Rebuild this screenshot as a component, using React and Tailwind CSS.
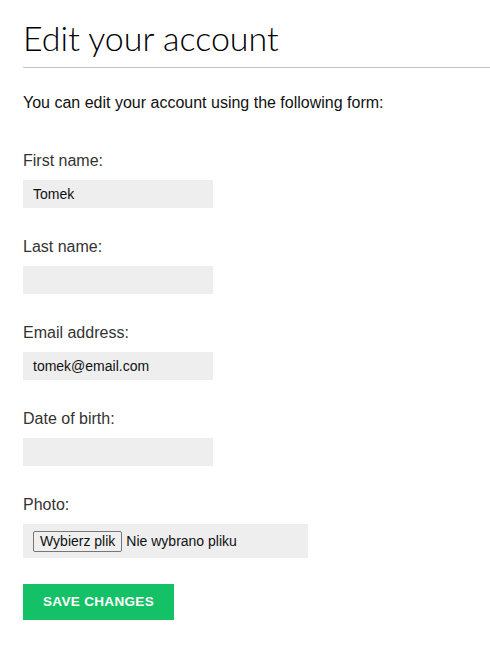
import React from 'react';

const Field = ({ label, value }) => (
  <div className="mb-[30px]">
    <label className="block text-[16px] leading-[18px] text-[#333] mb-[10px]">{label}</label>
    <div className="w-[190px] h-[28px] bg-[#eeeeee] pl-[10px] flex items-center text-[14px] text-[#111]">
      {value}
    </div>
  </div>
);

const App = () => {
  return (
    <div className="min-h-[651px] bg-white font-['Liberation_Sans',Arial,sans-serif] pl-[23px] pt-[18px]">
      <h1 className="font-['Lato',sans-serif] font-light text-[34px] leading-[40px] text-black">Edit your account</h1>
      <div className="h-px bg-[#c4c4c4] mt-[9px]" />
      <p className="mt-[25px] text-[16px] leading-[20px] text-[#111] mb-[39px]">
        You can edit your account using the following form:
      </p>
      <div>
        <Field label="First name:" value="Tomek" />
        <Field label="Last name:" value="" />
        <Field label="Email address:" value="tomek@email.com" />
        <Field label="Date of birth:" value="" />
        <div className="mb-[26px]">
          <label className="block text-[16px] leading-[18px] text-[#333] mb-[10px]">Photo:</label>
          <div className="w-[285px] h-[34px] bg-[#eeeeee] pl-[10px] flex items-center gap-[4px] text-[14px] text-[#111]">
            <span className="border border-[#767676] bg-[#efefef] rounded-[2px] px-[6px] h-[21px] flex items-center">Wybierz plik</span>
            <span>Nie wybrano pliku</span>
          </div>
        </div>
        <button className="w-[151px] h-[36px] bg-[#14c167] text-white text-[13.5px] font-bold uppercase tracking-wide">
          Save changes
        </button>
      </div>
    </div>
  );
};

export default App;
